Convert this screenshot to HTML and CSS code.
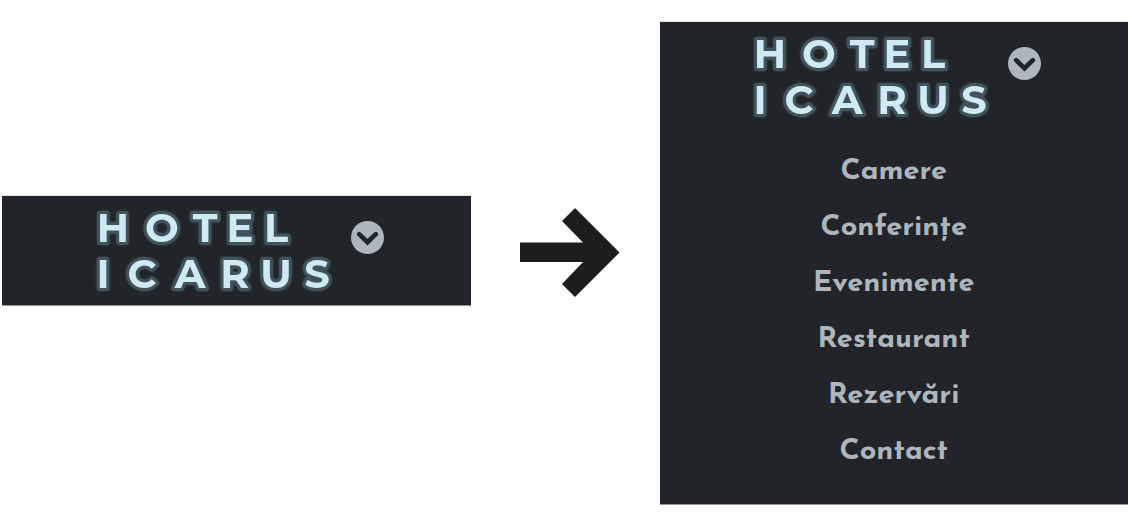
FILE: index.html
```html
<!DOCTYPE html>
<html lang="ro">
<head>
<meta charset="utf-8">
<meta name="viewport" content="width=device-width, initial-scale=1">
<title>Hotel Icarus</title>
<link rel="stylesheet" href="styles.css">
</head>
<body>
<main class="stage">
  <section class="panel panel-closed">
    <header class="bar">
      <svg class="logo" viewBox="0 0 236 88" role="img" aria-label="Hotel Icarus">
        <text class="logo-text" y="34" x="17 66 109 144 180">HOTEL</text>
        <text class="logo-text" y="80" x="7 46 94 139 180 221">ICARUS</text>
      </svg>
      <button class="toggle" type="button" aria-label="Deschide meniul" aria-expanded="false">
        <svg class="toggle-icon" viewBox="0 0 33 33" aria-hidden="true">
          <circle class="toggle-disc" cx="16.5" cy="16.5" r="16.5"/>
          <path class="toggle-chevron" d="M8.2 13.2 16.5 21.2 24.8 13.2"/>
        </svg>
      </button>
    </header>
  </section>

  <svg class="arrow" viewBox="0 0 100 89" aria-hidden="true">
    <path d="M0 34.5H63L42 13 55 0 99.500 44.500 55 89 42 76 63 54H0Z"/>
  </svg>

  <section class="panel">
    <header class="bar">
      <svg class="logo" viewBox="0 0 236 88" role="img" aria-label="Hotel Icarus">
        <text class="logo-text" y="34" x="17 66 109 144 180">HOTEL</text>
        <text class="logo-text" y="80" x="7 46 94 139 180 221">ICARUS</text>
      </svg>
      <button class="toggle" type="button" aria-label="Închide meniul" aria-expanded="true">
        <svg class="toggle-icon" viewBox="0 0 33 33" aria-hidden="true">
          <circle class="toggle-disc" cx="16.5" cy="16.5" r="16.5"/>
          <path class="toggle-chevron" d="M8.2 13.2 16.5 21.2 24.8 13.2"/>
        </svg>
      </button>
    </header>
    <nav class="menu">
      <a class="menu-link" href="#camere">Camere</a>
      <a class="menu-link" href="#conferinte">Conferințe</a>
      <a class="menu-link" href="#evenimente">Evenimente</a>
      <a class="menu-link" href="#restaurant">Restaurant</a>
      <a class="menu-link" href="#rezervari">Rezervări</a>
      <a class="menu-link" href="#contact">Contact</a>
    </nav>
  </section>
</main>
</body>
</html>
```
FILE: styles.css
```css
* {
  box-sizing: border-box;
}

body {
  margin: 0;
  background: #fff;
  font-family: "Josefin Sans", Lato, sans-serif;
}

.stage {
  display: grid;
  grid-template-columns: 1fr 189px 1fr;
  align-items: center;
  padding: 21px 4px 16px 2px;
}

.panel {
  background: #212529;
  border-top: 1px solid #dfe3e4;
  border-bottom: 1px solid #8f9496;
}

.panel-closed {
  margin-bottom: 26px;
}

.bar {
  display: flex;
  justify-content: center;
  align-items: flex-start;
  gap: 19px;
  padding: 12px 0 9px 7px;
}

.logo {
  width: 236px;
  height: 88px;
  overflow: visible;
}

.logo-text {
  font-family: "Century Gothic", Montserrat, Lato, sans-serif;
  font-size: 40px;
  font-weight: 700;
  text-anchor: middle;
  fill: #cfe9f5;
  stroke: #42535b;
  stroke-width: 6px;
  stroke-linejoin: round;
  paint-order: stroke;
  filter: drop-shadow(0 0 1px #42535b);
}

.toggle {
  display: block;
  margin: 13px 0 0;
  padding: 0;
  border: 0;
  background: none;
  cursor: pointer;
}

.toggle-icon {
  display: block;
  width: 33px;
  height: 33px;
}

.toggle-disc {
  fill: #adb5bd;
}

.toggle-chevron {
  fill: none;
  stroke: #212529;
  stroke-width: 4.6;
  stroke-linecap: round;
}

.arrow {
  width: 100px;
  height: 89px;
  margin-bottom: 22px;
  margin-left: 10px;
  justify-self: center;
  fill: #1d1d1b;
}

.menu {
  display: flex;
  flex-direction: column;
  align-items: center;
  padding: 13px 0 24px;
}

.menu-link {
  color: #adb5bd;
  font-size: 29px;
  font-weight: 700;
  line-height: 56px;
  text-decoration: none;
}
```
